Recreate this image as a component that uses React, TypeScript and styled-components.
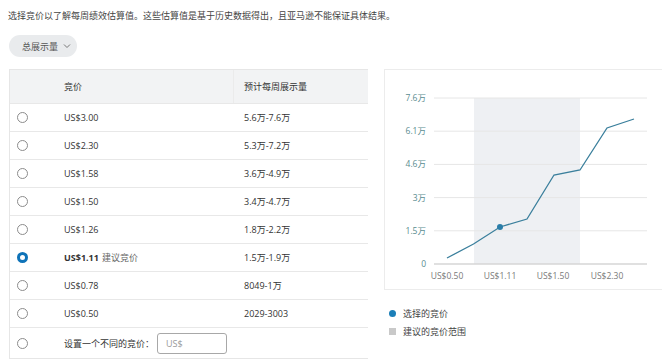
import React from "react";
import styled, { createGlobalStyle } from "styled-components";

const Global = createGlobalStyle`
  html, body { margin: 0; padding: 0; background: #fff; }
  body { font-family: "Open Sans", "Noto Sans CJK SC", sans-serif; color: #333; overflow: hidden; }
`;

const Page = styled.div`
  width: 662px;
  height: 359px;
  padding: 8px 0 0 9px;
  box-sizing: border-box;
  overflow: hidden;
`;

const Intro = styled.p`
  margin: 0 0 0 -1px;
  font-size: 9px;
  line-height: 16px;
  color: #444;
  white-space: nowrap;
`;

const Pill = styled.button`
  margin-top: 11px;
  height: 22px;
  width: 68px;
  border: none;
  border-radius: 11px;
  background: #e9ebed;
  display: flex;
  align-items: center;
  gap: 5px;
  padding: 0 0 0 13px;
  font-family: inherit;
  font-size: 9px;
  color: #555;
`;

const Main = styled.div`
  margin-top: 12px;
  display: flex;
  gap: 16px;
  align-items: flex-start;
`;

const Table = styled.div`
  flex: 0 0 359px;
  width: 359px;
  border: 1px solid #e6e6e6;
  border-right: none;
  box-sizing: border-box;
`;

const Row = styled.div<{ $head?: boolean; $h?: number }>`
  display: grid;
  grid-template-columns: 44px 179px 1fr;
  align-items: center;
  height: ${(p) => p.$h ?? 28}px;
  box-sizing: border-box;
  background: ${(p) => (p.$head ? "#f2f3f4" : "#fff")};
  border-bottom: 1px solid #e8e8e8;
  font-size: 9px;
  color: #333;
  &:last-child { border-bottom: none; }
`;

const Cell = styled.div<{ $divider?: boolean; $pad?: number }>`
  height: 100%;
  display: flex;
  align-items: center;
  padding-left: ${(p) => p.$pad ?? 0}px;
  box-sizing: border-box;
  border-left: ${(p) => (p.$divider ? "1px solid #ebebeb" : "none")};
  white-space: nowrap;
`;

const Radio = styled.span<{ $on?: boolean }>`
  margin-left: 7px;
  width: 11px;
  height: 11px;
  border-radius: 50%;
  box-sizing: border-box;
  border: ${(p) => (p.$on ? "3px solid #0f73b8" : "1px solid #8c8c8c")};
  background: #fff;
`;

const Strong = styled.b`
  font-weight: 700;
  margin-right: 3px;
`;

const Muted = styled.span`
  color: #666;
`;

const Input = styled.div`
  margin-left: 3px;
  width: 70px;
  height: 21px;
  border: 1px solid #a8a8a8;
  border-radius: 3px;
  box-sizing: border-box;
  display: flex;
  align-items: center;
  padding-left: 8px;
  color: #999;
  font-size: 9px;
`;

const Side = styled.div`
  flex: 0 0 292px;
  display: flex;
  flex-direction: column;
`;

const Card = styled.div`
  width: 292px;
  height: 221px;
  border: 1px solid #ececec;
  box-sizing: border-box;
`;

const Legend = styled.div`
  margin-top: 17px;
  padding-left: 5px;
  display: flex;
  flex-direction: column;
  gap: 6px;
`;

const LegendItem = styled.div`
  display: flex;
  align-items: center;
  gap: 7px;
  font-size: 9px;
  color: #444;
  height: 12px;
`;

const Swatch = styled.span<{ $round?: boolean }>`
  width: 7px;
  height: 7px;
  border-radius: ${(p) => (p.$round ? "50%" : "0")};
  background: ${(p) => (p.$round ? "#1b7fb8" : "#c9c9c9")};
`;

const rows = [
  { price: "US$3.00", range: "5.6万-7.6万" },
  { price: "US$2.30", range: "5.3万-7.2万" },
  { price: "US$1.58", range: "3.6万-4.9万" },
  { price: "US$1.50", range: "3.4万-4.7万" },
  { price: "US$1.26", range: "1.8万-2.2万" },
  { price: "US$1.11", range: "1.5万-1.9万", on: true },
  { price: "US$0.78", range: "8049-1万" },
  { price: "US$0.50", range: "2029-3003" },
];

const yLabels = ["7.6万", "6.1万", "4.6万", "3万", "1.5万", "0"];
const pts: [number, number][] = [
  [62, 188], [88.5, 174], [115, 157], [142, 149],
  [169, 105], [195, 100], [222, 58], [249, 49],
];

function Chart() {
  return (
    <svg width="290" height="219" viewBox="0 0 290 219">
      <rect x="89" y="28" width="106" height="166" fill="#eef0f3" />
      {yLabels.map((l, i) => {
        const y = 28 + i * 33.2;
        return (
          <g key={l}>
            <line x1="49" x2="262" y1={y} y2={y} stroke={i === 5 ? "#d6d6d6" : "#e6e6e6"} strokeWidth={i === 5 ? 1.5 : 1} />
            <text x="41" y={y + 3} textAnchor="end" fontSize="8.5" fill="#5a8c8f" fontFamily="Open Sans, Noto Sans CJK SC, sans-serif">{l}</text>
          </g>
        );
      })}
      {[["US$0.50", 62], ["US$1.11", 115], ["US$1.50", 168], ["US$2.30", 222]].map(([t, x]) => (
        <text key={t as string} x={x as number} y="209" textAnchor="middle" fontSize="8.5" fill="#7a7a7a" fontFamily="Open Sans, sans-serif">{t}</text>
      ))}
      <polyline points={pts.map((p) => p.join(",")).join(" ")} fill="none" stroke="#3a7f9c" strokeWidth="1.3" />
      <circle cx="115" cy="157" r="3" fill="#2a7ea9" />
    </svg>
  );
}

export default function App() {
  return (
    <Page>
      <Global />
      <Intro>选择竞价以了解每周绩效估算值。这些估算值是基于历史数据得出，且亚马逊不能保证具体结果。</Intro>
      <Pill>
        总展示量
        <svg width="8" height="6" viewBox="0 0 8 6"><path d="M1 1.5 L4 4.5 L7 1.5" fill="none" stroke="#777" strokeWidth="1" /></svg>
      </Pill>
      <Main>
        <Table>
          <Row $head $h={34}>
            <Cell />
            <Cell $pad={10}>竞价</Cell>
            <Cell $divider $pad={10}>预计每周展示量</Cell>
          </Row>
          {rows.map((r) => (
            <Row key={r.price}>
              <Cell><Radio $on={r.on} /></Cell>
              <Cell $pad={10}>
                {r.on ? (<><Strong>{r.price}</Strong><Muted>建议竞价</Muted></>) : r.price}
              </Cell>
              <Cell $pad={11}>{r.range}</Cell>
            </Row>
          ))}
          <Row $h={30}>
            <Cell><Radio /></Cell>
            <Cell $pad={10}>
              设置一个不同的竞价：<Input>US$</Input>
            </Cell>
            <Cell />
          </Row>
        </Table>
        <Side>
          <Card><Chart /></Card>
          <Legend>
            <LegendItem><Swatch $round />选择的竞价</LegendItem>
            <LegendItem><Swatch />建议的竞价范围</LegendItem>
          </Legend>
        </Side>
      </Main>
    </Page>
  );
}
